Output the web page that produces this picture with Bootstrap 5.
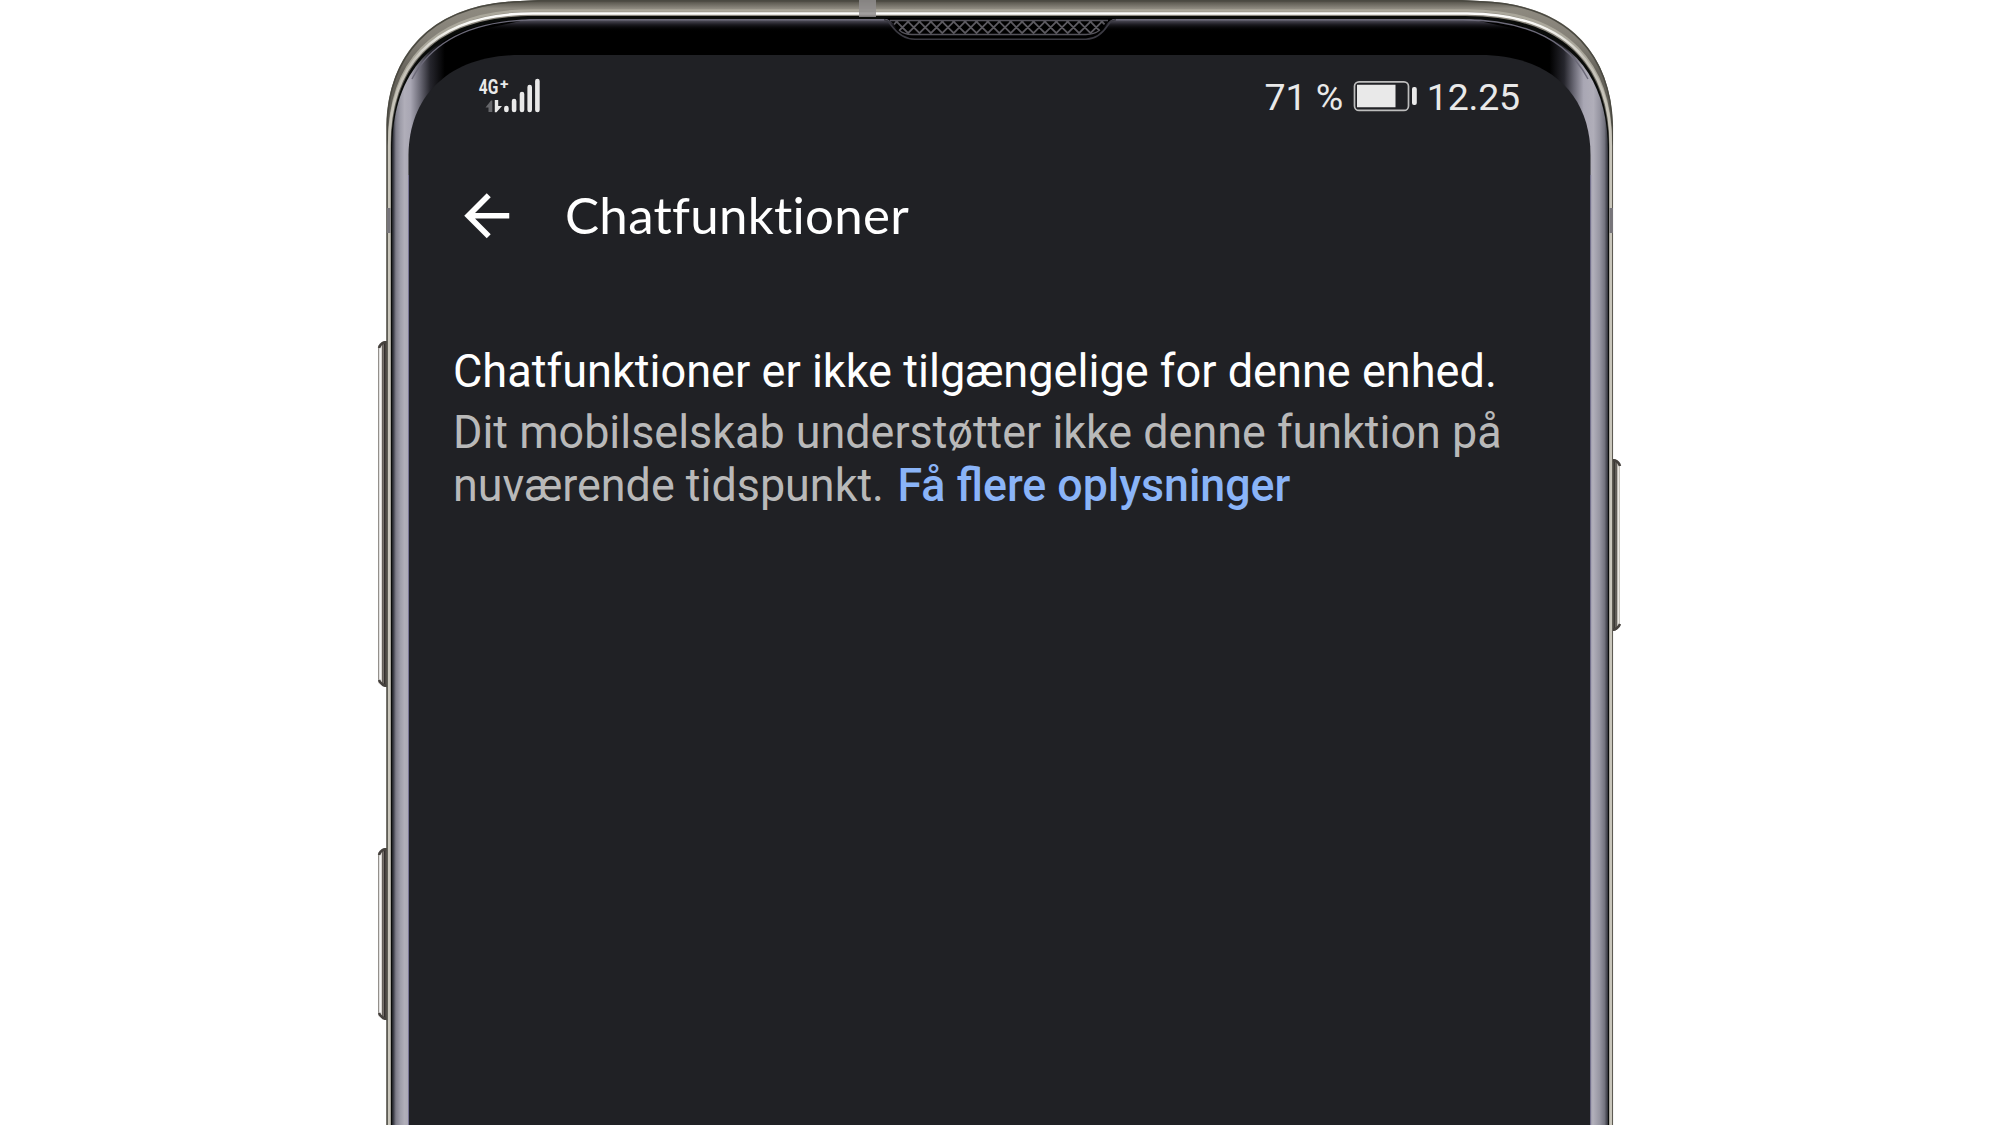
<!DOCTYPE html>
<html lang="da">
<head>
<meta charset="utf-8">
<meta name="viewport" content="width=device-width, initial-scale=1">
<title>Chatfunktioner</title>
<link href="https://cdn.jsdelivr.net/npm/bootstrap@5.3.0/dist/css/bootstrap.min.css" rel="stylesheet">
<style>
  body { background:#fff; font-family:Roboto,"Noto Sans",sans-serif; }
  .stage { width:2000px; height:1125px; }
  .shell { z-index:0; }
  .display { z-index:1; width:1182px; margin-left:409px; padding-top:55px; }
  .status { height:84px; padding:0 71px 0 67px; color:#e9e9e9; font-size:37.5px; line-height:1; }
  .batt { margin:0 7px 0 8.5px; }
  .clock { letter-spacing:-.2px; }
  .appbar { height:126px; padding:19px 0 0 43.5px; }
  .app-title { font-family:Lato,sans-serif; font-size:51px; line-height:60px; color:#fff; margin:27px 0 0 45px; letter-spacing:.3px; }
  .info { padding:76px 0 0 44px; font-size:47px; }
  .info p { transform-origin:0 0; white-space:nowrap; }
  .info-head { color:#fff; line-height:60px; transform:scaleX(.9595); }
  .info-text { color:#b9b9b9; line-height:52.500px; margin-top:5px; transform:scaleX(.955); }
  .info-text a { color:#8ab4f8; font-weight:500; font-size:46.800px; margin-left:2.500px; }
</style>
</head>
<body>
<div class="stage position-relative overflow-hidden">
  <svg class="shell position-absolute top-0 start-0" width="2000" height="1125" viewBox="0 0 2000 1125" aria-hidden="true">
    <defs>
      <linearGradient id="metal" gradientUnits="userSpaceOnUse" x1="0" y1="0" x2="0" y2="130">
        <stop offset="0" stop-color="#49473f"/><stop offset=".03" stop-color="#69665d"/><stop offset=".065" stop-color="#8d897f"/><stop offset=".3" stop-color="#858178"/><stop offset=".55" stop-color="#66635b"/><stop offset="1" stop-color="#5d5b54"/>
      </linearGradient>
      <linearGradient id="glass" gradientUnits="userSpaceOnUse" x1="391" y1="0" x2="1613" y2="0">
        <stop offset="0" stop-color="#08090b"/><stop offset=".002" stop-color="#3c3d46"/><stop offset=".004" stop-color="#7e7d89"/><stop offset=".0075" stop-color="#9d9ca8"/><stop offset=".011" stop-color="#b0aeb9"/><stop offset=".016" stop-color="#a9a7b4"/><stop offset=".024" stop-color="#696874"/><stop offset=".032" stop-color="#26262d"/><stop offset=".044" stop-color="#000"/>
        <stop offset=".948" stop-color="#000"/><stop offset=".96" stop-color="#26262d"/><stop offset=".968" stop-color="#696874"/><stop offset=".976" stop-color="#a9a7b4"/><stop offset=".984" stop-color="#b0aeb9"/><stop offset=".989" stop-color="#9796a2"/><stop offset=".993" stop-color="#74747f"/><stop offset=".996" stop-color="#2e2f37"/><stop offset="1" stop-color="#08090b"/>
      </linearGradient>
      <linearGradient id="sheen" gradientUnits="userSpaceOnUse" x1="0" y1="18" x2="0" y2="31">
        <stop offset="0" stop-color="#777485"/><stop offset=".2" stop-color="#4a4854"/><stop offset=".5" stop-color="#1d1c22"/><stop offset="1" stop-color="#000" stop-opacity="0"/>
      </linearGradient>
      <linearGradient id="rim" gradientUnits="userSpaceOnUse" x1="0" y1="10" x2="0" y2="135">
        <stop offset="0" stop-color="#fff"/><stop offset=".15" stop-color="#f4f3ee"/><stop offset=".4" stop-color="#c4c1b8"/><stop offset="1" stop-color="#c9c6bb"/>
      </linearGradient>
      <linearGradient id="keyL" x1="0" x2="1" y1="0" y2="0">
        <stop offset="0" stop-color="#77736e"/><stop offset=".12" stop-color="#b5b2ae"/><stop offset=".2" stop-color="#fff"/><stop offset=".38" stop-color="#e8e5e0"/><stop offset=".46" stop-color="#5d5853"/><stop offset=".62" stop-color="#77716b"/><stop offset=".72" stop-color="#332f2d"/><stop offset="1" stop-color="#686059"/>
      </linearGradient>
      <linearGradient id="keyR" x1="0" x2="1" y1="0" y2="0">
        <stop offset="0" stop-color="#77736a"/><stop offset=".3" stop-color="#35332f"/><stop offset=".5" stop-color="#77736c"/><stop offset=".62" stop-color="#4c4943"/><stop offset=".72" stop-color="#f3f0ea"/><stop offset=".88" stop-color="#e3e0d9"/><stop offset="1" stop-color="#aaa79e"/>
      </linearGradient>
      <clipPath id="meshClip"><path d="M890 20H1108L1100 30Q1094 34.500 1086 34.500H912Q904 34.500 899 30Z"/></clipPath>
      <clipPath id="glassClip"><path d="M391 1130V150C391 70 430 17 535 17H1465C1569 17 1609 70 1609 150V1130Z"/></clipPath>
    </defs>

    <!-- side keys -->
    <g>
      <path d="M387 341H385Q378 342 378 349V679Q378 687 387 687Z" fill="url(#keyL)"/>
      <path d="M387 342.500H384Q380 344 379 348M379 680Q381 685 387 686" fill="none" stroke="#45413d" stroke-width="2.500"/>
      <path d="M387 848H385Q378 849 378 856V1012Q378 1020 387 1020Z" fill="url(#keyL)"/>
      <path d="M387 849.500H384Q380 851 379 855M379 1013Q381 1018 387 1019" fill="none" stroke="#45413d" stroke-width="2.500"/>
      <path d="M1612 459H1614Q1620 460 1620 467V623Q1620 631 1612 631Z" fill="url(#keyR)"/>
      <path d="M1612 460.500H1615Q1619 462 1620 466M1620 624Q1618 629 1612 630" fill="none" stroke="#45413d" stroke-width="2.500"/>
    </g>

    <!-- metal frame -->
    <path d="M386.500 1130V125C388 60 425 4 520 1L540 0H1460L1480 1C1575 4 1611 60 1613 125V1130Z" fill="url(#metal)"/>
    <path d="M387.200 1130V125C388.700 60.500 425.500 5 520 1.800L540 .8H1460L1480 1.800C1574.500 5 1610.300 60.500 1612.300 125V1130" fill="none" stroke="#4a4941" stroke-width="1.500"/>
    <path d="M389.200 1130V142C389.200 68 428 10.500 533 10.500H1467C1571 10.500 1610.800 68 1610.800 142V1130" fill="none" stroke="#aaa79b" stroke-width="2.600"/>
    <path d="M389.200 1130V146C389.200 70 428 13.500 533 13.500H1467C1571 13.500 1610.800 70 1610.800 146V1130" fill="none" stroke="url(#rim)" stroke-width="2.600"/>
    <path d="M391 1130V150C391 70 430 16 535 16H1465C1569 16 1609 70 1609 150V1130Z" fill="#090b09"/>

    <!-- curved glass edge -->
    <g clip-path="url(#glassClip)">
      <path d="M392 1130V151C392 73 432 19 537 19H1463C1567 19 1608 73 1608 151V1130Z" fill="url(#glass)"/>
      <path d="M475 31L530 19H1470L1525 31Z" fill="url(#sheen)"/>
      <path d="M412 79C432 41 472 20 537 19.700H1463C1528 20 1568 41 1588 79" fill="none" stroke="#6c6a79" stroke-width="1.400"/>
    </g>

    <!-- antenna bands -->
    <path d="M859 0H876V17H859Z" fill="#918e8e" opacity=".85"/>
    <path d="M387 208H390.500V233H387ZM1609.500 208H1613V233H1609.500Z" fill="#77757a"/>

    <!-- earpiece -->
    <path d="M884 18H1116Q1109 20 1105 26Q1096 39.500 1085 39.500H915Q904 39.500 895 26Q891 20 884 18Z" fill="#000"/>
    <path d="M884 19.700Q888 20 891 25Q901 39 915 39.300H1086Q1099 39 1108 25Q1111 20 1116 19.700" fill="none" stroke="#3b3a42" stroke-width="1.500"/>
    <g id="mesh" clip-path="url(#meshClip)" fill="none" stroke="#5c5a60" stroke-width="1.800"></g>
    <path d="M890 20.500H1108M899 30Q904 34.500 912 34.500H1086Q1094 34.500 1100 30" fill="none" stroke="#55535b" stroke-width="1.300"/>

    <!-- display panel -->
    <path d="M408.500 1130V155C409 95 450 55 520 55H1480C1550 55 1590.500 95 1590.500 155V1130Z" fill="#202125"/>
    <path d="M408.500 1130V175M1590.700 1130V175" stroke="#777394" stroke-width="1"/>
  </svg>

  <main class="display position-relative">
    <div class="status d-flex justify-content-between">
      <svg width="76" height="84" viewBox="476 55 76 84" fill="#e9e9e9" role="img" aria-label="4G+">
        <g font-family="Roboto,sans-serif" font-weight="700">
          <text transform="translate(478.800 94) scale(.74 1)" font-size="21">4G</text>
          <text transform="translate(500 89)" font-size="15.500">+</text>
        </g>
        <path d="M485.500 107.500L491 100.500H492.300V112H488.500V107.500Z" fill="#65666a"/>
        <path d="M494.800 100H498.200V106H502L496.500 112.200H494.800Z"/>
        <g stroke="#e9e9e9" stroke-width="4.600" stroke-linecap="round">
          <path d="M506.400 108V110M514.100 101V110M522 94V110M529.700 87V110M537.400 81V110"/>
        </g>
      </svg>
      <div class="d-flex align-items-start pt-4">
        <span>71 %</span>
        <svg class="batt" width="68" height="36" viewBox="1352 79 68 36" aria-hidden="true">
          <rect x="1354.500" y="81.800" width="54" height="28.600" rx="4.500" fill="none" stroke="#bdbdbd" stroke-width="1.700"/>
          <path d="M1357 84.800H1395.500V107.200H1357Z" fill="#e9e9e9"/>
          <rect x="1412" y="87" width="4.800" height="18" rx="2" fill="#e9e9e9"/>
        </svg>
        <span class="clock">12.25</span>
      </div>
    </div>

    <header class="appbar d-flex align-items-start">
      <svg width="67.500" height="67.500" viewBox="0 0 24 24" fill="#fff" role="img" aria-label="Tilbage" class="mt-4"><path d="M20 11H7.830l5.590-5.590L12 4l-8 8 8 8 1.410-1.410L7.830 13H20v-2z"/></svg>
      <h1 class="app-title fw-normal">Chatfunktioner</h1>
    </header>

    <section class="info">
      <p class="info-head mb-0">Chatfunktioner er ikke tilgængelige for denne enhed.</p>
      <p class="info-text mb-0">Dit mobilselskab understøtter ikke denne funktion på<br>nuværende tidspunkt. <a class="text-decoration-none" href="#">Få flere oplysninger</a></p>
    </section>
  </main>
</div>
<script src="https://cdn.jsdelivr.net/npm/bootstrap@5.3.0/dist/js/bootstrap.bundle.min.js"></script>
<script>
  // crossed wires of the earpiece grille
  let wires = '';
  for (let i = -3; i < 22; i++) {
    const x = 892 + i * 11.4;
    wires += `M${x} 17l20 20M${x + 20.800} 17l-20 20`;
  }
  document.getElementById('mesh').innerHTML = `<path d="${wires}"/>`;
</script>
</body>
</html>
